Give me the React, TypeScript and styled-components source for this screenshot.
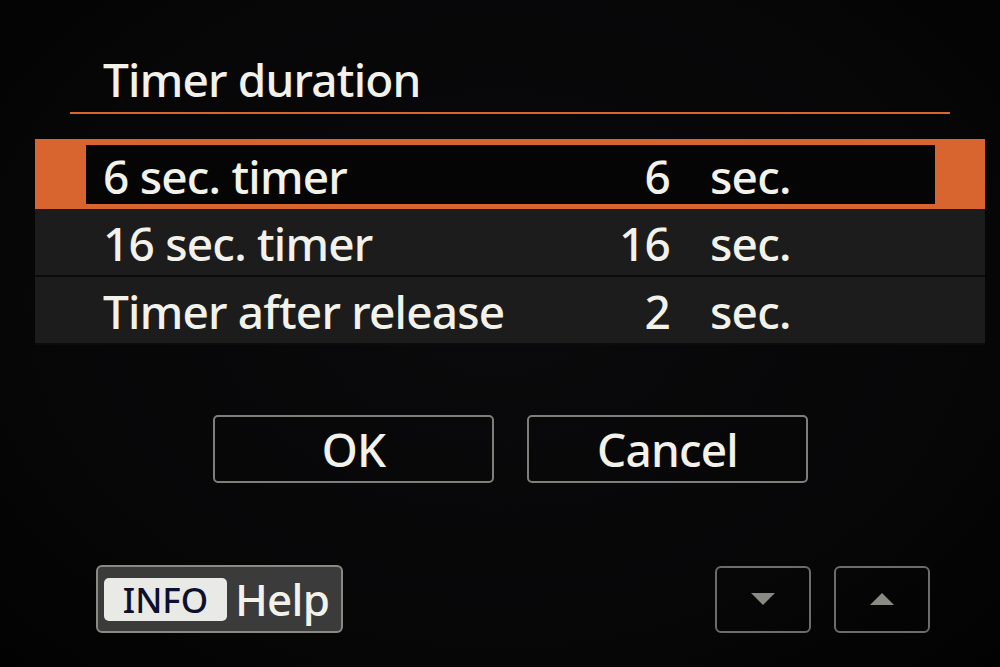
import React from "react";
import styled, { createGlobalStyle } from "styled-components";

const Global = createGlobalStyle`
  html, body { margin: 0; padding: 0; background: #000; }
  body { font-family: "Noto Sans", "Open Sans", sans-serif; }
`;

const Screen = styled.div`
  width: 1000px;
  height: 667px;
  box-sizing: border-box;
  background: radial-gradient(ellipse at 50% 45%, #0a0a0c 0%, #060607 70%, #020202 100%);
  color: #f2f2ea;
  display: flex;
  flex-direction: column;
  overflow: hidden;
`;

const Title = styled.div`
  font-size: 46px;
  font-weight: 500;
  line-height: 1;
  margin: 56px 0 0 103px;
  height: 46px;
  letter-spacing: -0.8px;
`;

const Rule = styled.div`
  margin: 10px 0 0 70px;
  width: 880px;
  height: 2px;
  background: #d9652f;
`;

const List = styled.div`
  margin: 25px 0 0 35px;
  width: 950px;
  display: flex;
  flex-direction: column;
`;

const Row = styled.div<{ $selected?: boolean }>`
  height: ${(p) => (p.$selected ? "70px" : "68px")};
  box-sizing: border-box;
  background: ${(p) => (p.$selected ? "#d8642f" : "#1c1c1c")};
  padding: ${(p) => (p.$selected ? "6px 50px 5px 51px" : "0")};
  border-bottom: ${(p) => (p.$selected ? "none" : "2px solid #0b0b0b")};
  display: flex;
`;

const RowInner = styled.div<{ $selected?: boolean }>`
  flex: 1;
  background: ${(p) => (p.$selected ? "#050505" : "transparent")};
  display: flex;
  align-items: center;
  padding-left: ${(p) => (p.$selected ? "17px" : "68px")};
  padding-top: 2px;
  font-size: 46px;
  font-weight: 500;
  letter-spacing: -0.8px;
`;

const Label = styled.span`
  width: 474px;
  white-space: nowrap;
`;

const Num = styled.span`
  width: 93px;
  text-align: right;
`;

const Unit = styled.span`
  margin-left: 40px;
`;

const Buttons = styled.div`
  margin-top: 70px;
  display: flex;
  gap: 33px;
  padding-left: 213px;
`;

const Button = styled.div`
  width: 281px;
  height: 68px;
  box-sizing: border-box;
  border: 2px solid #7e7e7a;
  border-radius: 5px;
  display: flex;
  align-items: center;
  justify-content: center;
  font-size: 46px;
  font-weight: 500;
  letter-spacing: -0.8px;
`;

const Footer = styled.div`
  margin-top: 82px;
  display: flex;
  align-items: center;
  padding-left: 96px;
`;

const HelpBox = styled.div`
  width: 247px;
  height: 68px;
  box-sizing: border-box;
  background: #3b3b3b;
  border: 2px solid #8a8a85;
  border-radius: 6px;
  display: flex;
  align-items: center;
  padding-left: 6px;
  gap: 8px;
`;

const InfoPill = styled.div`
  width: 123px;
  height: 43px;
  box-sizing: border-box;
  background: #e9e9e6;
  border-radius: 5px;
  color: #0e1030;
  font-size: 35px;
  font-weight: 500;
  display: flex;
  align-items: center;
  justify-content: center;
`;

const HelpText = styled.span`
  font-size: 44px;
  font-weight: 500;
  color: #f2f2ea;
  letter-spacing: -0.8px;
`;

const Arrows = styled.div`
  margin-left: auto;
  margin-right: 70px;
  display: flex;
  gap: 23px;
`;

const ArrowBox = styled.div`
  width: 96px;
  height: 67px;
  box-sizing: border-box;
  border: 2px solid #6c6c68;
  border-radius: 6px;
  display: flex;
  align-items: center;
  justify-content: center;
`;

const Tri = ({ up }: { up?: boolean }) => (
  <svg width="28" height="16" viewBox="0 0 28 16">
    <polygon points={up ? "2,14 26,14 14,2" : "2,2 26,2 14,14"} fill="#8a8a84" />
  </svg>
);

const rows = [
  { label: "6 sec. timer", num: "6", selected: true },
  { label: "16 sec. timer", num: "16" },
  { label: "Timer after release", num: "2" },
];

export default function App() {
  return (
    <>
      <Global />
      <Screen>
        <Title>Timer duration</Title>
        <Rule />
        <List>
          {rows.map((r) => (
            <Row key={r.label} $selected={r.selected}>
              <RowInner $selected={r.selected}>
                <Label>{r.label}</Label>
                <Num>{r.num}</Num>
                <Unit>sec.</Unit>
              </RowInner>
            </Row>
          ))}
        </List>
        <Buttons>
          <Button>OK</Button>
          <Button>Cancel</Button>
        </Buttons>
        <Footer>
          <HelpBox>
            <InfoPill>INFO</InfoPill>
            <HelpText>Help</HelpText>
          </HelpBox>
          <Arrows>
            <ArrowBox>
              <Tri />
            </ArrowBox>
            <ArrowBox>
              <Tri up />
            </ArrowBox>
          </Arrows>
        </Footer>
      </Screen>
    </>
  );
}
